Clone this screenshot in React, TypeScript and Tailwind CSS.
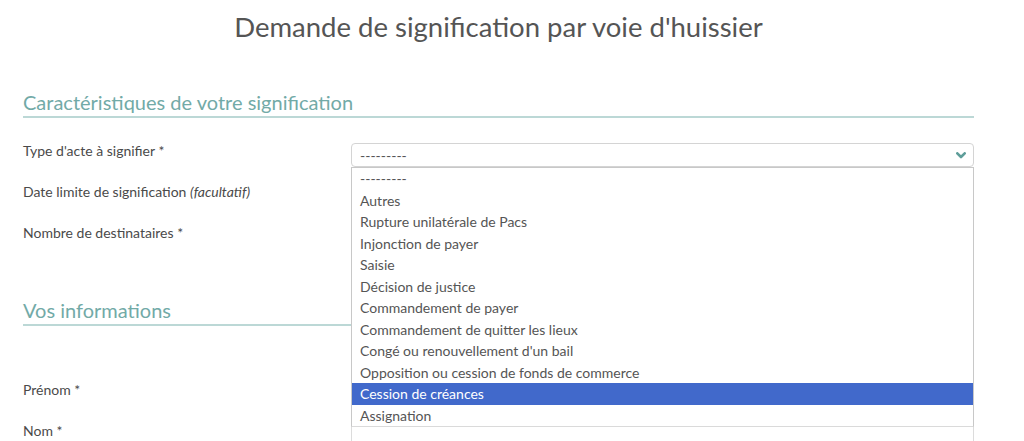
import React from "react";

const options = [
  "---------",
  "Autres",
  "Rupture unilatérale de Pacs",
  "Injonction de payer",
  "Saisie",
  "Décision de justice",
  "Commandement de payer",
  "Commandement de quitter les lieux",
  "Congé ou renouvellement d'un bail",
  "Opposition ou cession de fonds de commerce",
  "Cession de créances",
  "Assignation",
];

function Row({ label, children }: { label: React.ReactNode; children?: React.ReactNode }) {
  return (
    <div className="flex h-[41px] items-start">
      <div className="w-[328px] text-[14px] leading-[16px] text-[#4a4a4a]">{label}</div>
      <div className="relative w-[623px]">{children}</div>
    </div>
  );
}

function Input() {
  return <div className="h-[24px] w-full rounded-[4px] border border-[#dcdcdc] bg-white" />;
}

export default function App() {
  return (
    <div className="h-[441px] overflow-hidden bg-white font-['Lato','Open_Sans',sans-serif]">
      <div className="ml-[23px] w-[951px]">
        <h1 className="pt-[10px] text-center text-[27.5px] leading-[34px] text-[#555]">
          Demande de signification par voie d'huissier
        </h1>
        <h2 className="mt-[44px] border-b-2 border-[#bcd8d6] text-[20px] leading-[28px] text-[#72aaa7]">
          Caractéristiques de votre signification
        </h2>
        <div className="mt-[25px]">
          <Row label="Type d'acte à signifier *">
            <div className="flex h-[24px] w-full items-center justify-between rounded-[4px] border border-[#d4d4d4] bg-white pl-[8px] pr-[7px] text-[14px] text-[#555]">
              <span>---------</span>
              <svg width="10" height="7" viewBox="0 0 10 7" className="mt-[1px]">
                <path d="M1.3 1.3 L5 5 L8.7 1.3" fill="none" stroke="#5f9e9a" strokeWidth="2.6" strokeLinecap="round" strokeLinejoin="round" />
              </svg>
            </div>
            <ul className="absolute left-0 top-[24px] z-10 w-full border border-[#c8c8c8] border-b-[#dadada] bg-white text-[14px] text-[#555]">
              {options.map((o, i) => (
                <li
                  key={i}
                  className={
                    i === 10
                      ? "flex h-[21.5px] items-center bg-[#4169cb] pl-[8px] text-white"
                      : "flex h-[21.5px] items-center pl-[8px]"
                  }
                >
                  {o}
                </li>
              ))}
            </ul>
          </Row>
          <Row
            label={
              <>
                Date limite de signification <i>(facultatif)</i>
              </>
            }
          >
            <Input />
          </Row>
          <Row label="Nombre de destinataires *">
            <Input />
          </Row>
        </div>
        <h2 className="mt-[30px] border-b-2 border-[#bcd8d6] text-[20px] leading-[28px] text-[#72aaa7]">
          Vos informations
        </h2>
        <div className="mt-[56px]">
          <Row label="Prénom *">
            <Input />
          </Row>
          <Row label="Nom *">
            <Input />
          </Row>
        </div>
      </div>
    </div>
  );
}
